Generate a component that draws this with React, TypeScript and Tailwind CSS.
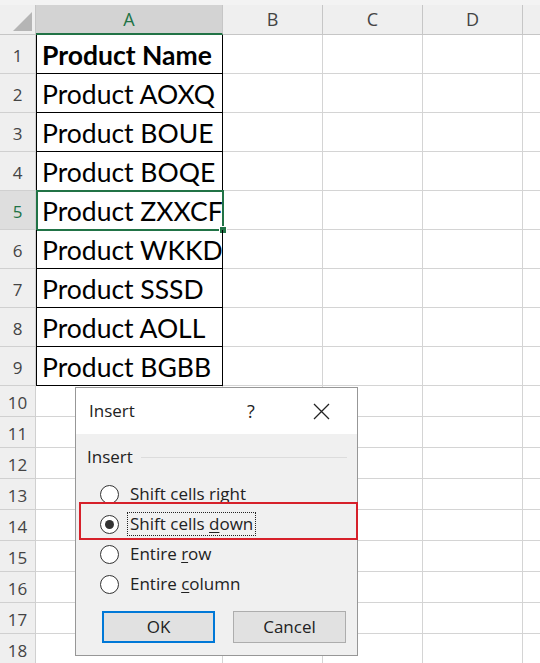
import React from "react";

const products = [
  "Product Name",
  "Product AOXQ",
  "Product BOUE",
  "Product BOQE",
  "Product ZXXCF",
  "Product WKKD",
  "Product SSSD",
  "Product AOLL",
  "Product BGBB",
];

const rows = Array.from({ length: 18 }, (_, i) => i + 1);

function CornerCell() {
  return (
    <div className="relative w-[36px] shrink-0 bg-[#efefef] border-r border-b border-[#c6c6c6]">
      <svg className="absolute right-[3px] bottom-[3px]" width="19" height="19" viewBox="0 0 19 19">
        <polygon points="19,0 19,19 0,19" fill="#b5b5b5" />
      </svg>
    </div>
  );
}

function ColHeader({ label, width, active }: { label: string; width: string; active?: boolean }) {
  return (
    <div
      className={`${width} shrink-0 flex items-center justify-center text-[18px] border-r border-[#c6c6c6] ${
        active
          ? "bg-[#d3d3d3] text-[#217346] border-b-2 border-b-[#217346]"
          : "bg-[#efefef] text-[#444] border-b border-b-[#c6c6c6]"
      }`}
    >
      {label}
    </div>
  );
}

function Radio({ checked }: { checked?: boolean }) {
  return (
    <span className="w-[19px] h-[19px] shrink-0 rounded-full border border-[#333] bg-white flex items-center justify-center">
      {checked && <span className="w-[9px] h-[9px] rounded-full bg-[#333]" />}
    </span>
  );
}

function InsertDialog() {
  const options = [
    { pre: "Shift cells right", u: "", post: "" },
    { pre: "Shift cells ", u: "d", post: "own", checked: true },
    { pre: "Entire ", u: "r", post: "ow" },
    { pre: "Entire ", u: "c", post: "olumn" },
  ];
  return (
    <div className="absolute left-[75px] top-[387px] w-[283px] h-[269px] border border-[#979797] bg-[#f0f0f0] font-['Open_Sans',sans-serif] text-[#222]">
      {/* title bar */}
      <div className="h-[46px] bg-white flex items-center pl-[13px] pr-[14px]">
        <span className="flex-1 text-[17px]">Insert</span>
        <span className="w-[30px] mr-[33px] text-center text-[18px]">?</span>
        <span className="w-[44px] flex justify-center">
          <svg width="17" height="17" viewBox="0 0 17 17">
            <path d="M1 1 L16 16 M16 1 L1 16" stroke="#222" strokeWidth="1.3" fill="none" />
          </svg>
        </span>
      </div>

      {/* group header */}
      <div className="mt-[13px] h-[20px] flex items-center gap-[8px] pl-[11px] pr-[10px]">
        <span className="text-[17px]">Insert</span>
        <span className="flex-1 h-px bg-[#dcdcdc]" />
      </div>

      {/* options */}
      <div className="mt-[12px] pl-[24px]">
        {options.map((o) => (
          <div key={o.pre + o.post} className="h-[30px] flex items-center gap-[8px]">
            <Radio checked={o.checked} />
            <span
              className={`block h-[24px] leading-[22px] px-[2px] border border-dotted whitespace-pre text-[17px] ${
                o.checked ? "border-[#222]" : "border-transparent"
              }`}
            >
              {o.pre}
              {o.u && <span className="underline underline-offset-2">{o.u}</span>}
              {o.post}
            </span>
          </div>
        ))}
      </div>

      {/* buttons */}
      <div className="mt-[12px] flex gap-[18px] pl-[26px]">
        <button className="w-[113px] h-[32px] bg-[#e1e1e1] border-2 border-[#0078d7] text-[17px]">OK</button>
        <button className="w-[113px] h-[32px] bg-[#e1e1e1] border border-[#adadad] text-[17px]">Cancel</button>
      </div>
    </div>
  );
}

export default function App() {
  return (
    <div className="relative w-[540px] h-[663px] overflow-hidden bg-white font-['Open_Sans',sans-serif]">
      <div className="h-[5px] bg-[#f3f3f3]" />
      {/* column headers */}
      <div className="h-[30px] flex">
        <CornerCell />
        <ColHeader label="A" width="w-[187px]" active />
        <ColHeader label="B" width="w-[100px]" />
        <ColHeader label="C" width="w-[100px]" />
        <ColHeader label="D" width="w-[100px]" />
        <div className="flex-1 bg-[#efefef] border-b border-[#c6c6c6]" />
      </div>

      {rows.map((r) => {
        const tall = r <= 9;
        const selected = r === 5;
        return (
          <div key={r} className={`flex ${tall ? "h-[39px]" : "h-[31px]"}`}>
            <div
              className={`w-[36px] shrink-0 flex items-center justify-center pt-[4px] text-[17px] border-r border-b border-[#d0d0d0] ${
                selected ? "bg-[#dedede] text-[#217346]" : "bg-[#efefef] text-[#444]"
              }`}
            >
              {r}
            </div>
            {tall ? (
              <div className="relative w-[187px] shrink-0 flex items-end pl-[6px] pb-[5px] border-r border-b border-black shadow-[inset_1px_0_0_#000] font-['Lato',sans-serif] text-[26.5px] leading-none text-black whitespace-nowrap">
                <span className={r === 1 ? "font-bold" : ""}>{products[r - 1]}</span>
                {selected && (
                  <>
                    <div className="absolute left-0 -top-px w-[188px] h-[41px] border-2 border-[#217346]" />
                    <div className="absolute -right-[5px] -bottom-[5px] w-[8px] h-[8px] bg-[#217346] border border-white" />
                  </>
                )}
              </div>
            ) : (
              <div className="w-[187px] shrink-0 border-r border-b border-[#d4d4d4]" />
            )}
            <div className="w-[100px] shrink-0 border-r border-b border-[#d4d4d4]" />
            <div className="w-[100px] shrink-0 border-r border-b border-[#d4d4d4]" />
            <div className="w-[100px] shrink-0 border-r border-b border-[#d4d4d4]" />
            <div className="flex-1 border-b border-[#d4d4d4]" />
          </div>
        );
      })}

      <InsertDialog />
      {/* annotation box */}
      <div className="absolute left-[79px] top-[502px] w-[279px] h-[38px] border-2 border-[#d6202a]" />
    </div>
  );
}
